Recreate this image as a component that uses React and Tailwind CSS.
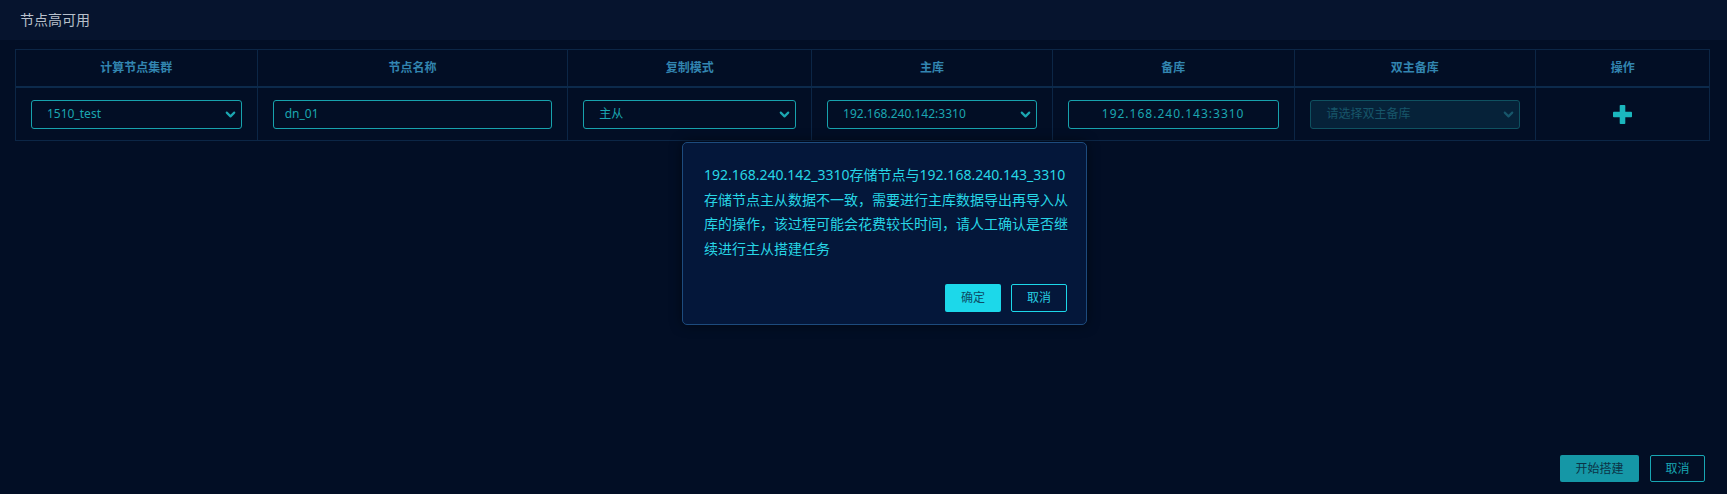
import React from "react";
import { ChevronDown } from "lucide-react";

const columns = [
  { title: "计算节点集群", w: "w-[242px]" },
  { title: "节点名称", w: "w-[311px]" },
  { title: "复制模式", w: "w-[244px]" },
  { title: "主库", w: "w-[241px]" },
  { title: "备库", w: "w-[242px]" },
  { title: "双主备库", w: "w-[242px]" },
  { title: "操作", w: "w-[173px]" },
];

const SelectBox = ({ value, disabled }) => (
  <div
    className={
      disabled
        ? "flex h-[29px] items-center justify-between rounded-[3px] border border-[#0f5160] bg-[#062239] pl-4 pr-[3px] text-xs text-[#17566a]"
        : "flex h-[29px] items-center justify-between rounded-[3px] border border-[#17a2ad] pl-[15px] pr-[3px] text-xs text-[#1ba6b1]"
    }
  >
    <span>{value}</span>
    <ChevronDown
      size={15}
      strokeWidth={3.4}
      className={disabled ? "text-[#17566a]" : "text-[#1ba6b1]"}
    />
  </div>
);

const TextBox = ({ value, center }) => (
  <div
    className={
      center
        ? "flex h-[29px] items-center justify-center rounded-[3px] border border-[#17a2ad] text-xs tracking-[1px] text-[#1ba6b1]"
        : "flex h-[29px] items-center rounded-[3px] border border-[#17a2ad] px-[11px] text-xs text-[#1ba6b1]"
    }
  >
    {value}
  </div>
);

const App = () => {
  const cells = [
    <SelectBox value="1510_test" />,
    <TextBox value="dn_01" />,
    <SelectBox value="主从" />,
    <SelectBox value="192.168.240.142:3310" />,
    <TextBox value="192.168.240.143:3310" center />,
    <SelectBox value="请选择双主备库" disabled />,
    <div className="flex justify-center">
      <svg width="19" height="19" viewBox="0 0 19 19">
        <rect x="6.7" y="0" width="5.6" height="19" rx="0.8" fill="#1bb7be" />
        <rect x="0" y="6.7" width="19" height="5.6" rx="0.8" fill="#1bb7be" />
      </svg>
    </div>,
  ];

  return (
    <div
      className="relative flex h-[494px] w-full flex-col bg-[#020e25]"
      style={{ fontFamily: '"Noto Sans", "Noto Sans CJK SC", sans-serif' }}
    >
      {/* page header */}
      <div className="flex h-10 items-center bg-[#06142e] px-5 text-sm text-[#b8c0cb]">
        节点高可用
      </div>

      {/* node table */}
      <div className="mt-[9px] pl-[15px]">
        <div className="w-[1695px] border border-[#0c2646]">
          <div className="flex h-[38px] border-b-2 border-[#0c2a4c]">
            {columns.map((c, i) => (
              <div
                key={c.title}
                className={`${c.w} flex items-center justify-center text-xs font-semibold text-[#3285b0] ${
                  i < columns.length - 1 ? "border-r border-[#0c2646]" : ""
                }`}
              >
                {c.title}
              </div>
            ))}
          </div>
          <div className="flex h-[52px]">
            {columns.map((c, i) => (
              <div
                key={c.title}
                className={`${c.w} flex flex-col justify-center px-[15px] ${
                  i < columns.length - 1 ? "border-r border-[#0c2646]" : ""
                }`}
              >
                {cells[i]}
              </div>
            ))}
          </div>
        </div>
      </div>

      <div className="flex-1" />

      {/* footer actions */}
      <div className="flex justify-end gap-[11px] pb-3 pr-[22px]">
        <button className="h-[27px] w-[79px] rounded-[2px] bg-[#1597a6] text-xs text-[#0b3346]">
          开始搭建
        </button>
        <button className="h-[27px] w-[55px] rounded-[2px] border border-[#18a6b3] text-xs text-[#18a6b3]">
          取消
        </button>
      </div>

      {/* confirm dialog */}
      <div className="absolute left-[682px] top-[142px] flex h-[183px] w-[405px] flex-col rounded-[5px] border border-[#1d4b7d] bg-[#04173a] shadow-[0_0_12px_rgba(0,0,0,0.5)]">
        <div className="whitespace-nowrap px-[21px] pt-[20px] text-sm leading-[24.5px] text-[#27d6e6]">
          <div>192.168.240.142_3310存储节点与192.168.240.143_3310</div>
          <div>存储节点主从数据不一致，需要进行主库数据导出再导入从</div>
          <div>库的操作，该过程可能会花费较长时间，请人工确认是否继</div>
          <div>续进行主从搭建任务</div>
        </div>
        <div className="flex-1" />
        <div className="flex justify-end gap-[10px] pb-3 pr-[19px]">
          <button className="h-[28px] w-[56px] rounded-[2px] bg-[#1cd8ea] text-xs text-[#0d4c66]">
            确定
          </button>
          <button className="h-[28px] w-[56px] rounded-[2px] border border-[#1cd8ea] text-xs text-[#27cfe2]">
            取消
          </button>
        </div>
      </div>
    </div>
  );
};

export default App;
